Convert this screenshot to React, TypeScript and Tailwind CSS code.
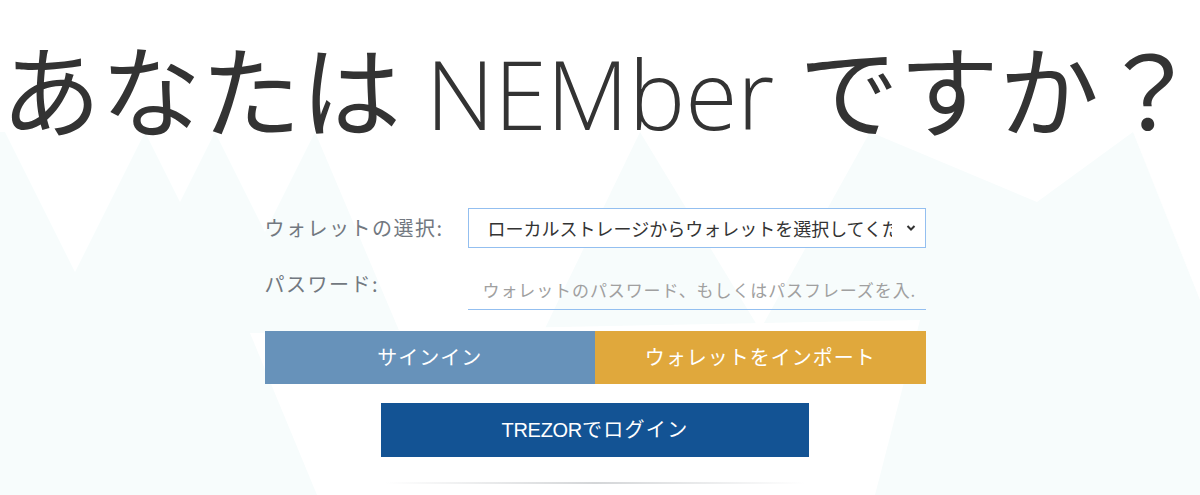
import React from "react";

// ── Background mountains (very faint) ────────────────────────────────────────

function Mountains() {
  const light = "#f7fcfc";
  return (
    <svg
      className="absolute inset-0 h-full w-full"
      viewBox="0 0 1200 495"
      preserveAspectRatio="none"
      aria-hidden="true"
    >
      <rect x="0" y="132" width="1200" height="363" fill={light} />
      {/* white notches between the peaks */}
      <polygon points="5,132 145,132 75,272" fill="#fff" />
      <polygon points="145,132 215,132 180,202" fill="#fff" />
      <polygon points="215,132 315,132 265,232" fill="#fff" />
      <polygon points="315,132 640,132 520,380 420,380" fill="#fff" />
      <polygon points="640,132 870,132 760,330" fill="#fff" />
      <polygon points="870,132 1133,132 1037,202" fill="#fff" />
      <polygon points="1133,132 1200,132 1200,300" fill="#fff" />
      {/* white valley under the buttons */}
      <polygon points="250,333 920,320 875,495 317,495" fill="#fff" />
    </svg>
  );
}

// ── Main ─────────────────────────────────────────────────────────────────────

export default function App() {
  const jp = "font-['Noto_Sans_CJK_JP','Noto_Sans',sans-serif]";
  return (
    <div className={`relative h-[495px] w-[1200px] overflow-hidden bg-white ${jp}`}>
      <Mountains />

      <div className="relative flex flex-col items-center">
        {/* Heading */}
        <h1 className="mt-[37px] whitespace-nowrap text-[100px] leading-none text-[#333]">
          あなたは
          <span className="font-['Open_Sans','Liberation_Sans',sans-serif] text-[95px] font-light"> NEMber </span>
          ですか？
        </h1>

        {/* Form */}
        <div className="mt-[67px] w-[661px] -translate-x-[5px]">
          <div className="flex items-center">
            <label className="w-[203px] text-[20px] tracking-[1.5px] text-[#727880]">ウォレットの選択:</label>
            <div className="flex h-[40px] flex-1 items-center justify-between border border-[#93bff0] bg-white pl-[19px] pr-[9px]">
              <span className="w-[404px] overflow-hidden whitespace-nowrap text-[18px] text-[#333]">
                ローカルストレージからウォレットを選択してください
              </span>
              <svg width="10" height="8" viewBox="0 0 10 8" className="shrink-0">
                <path d="M1.5 2l3.5 3.5L8.5 2" stroke="#333" strokeWidth="2" fill="none" />
              </svg>
            </div>
          </div>

          <div className="mt-[21px] flex items-start">
            <label className="w-[203px] text-[20px] tracking-[1.5px] text-[#727880]">パスワード:</label>
            <div className="flex-1 border-b border-[#93bff0] pb-[6px] pl-[15px] pt-[8px]">
              <span className="whitespace-nowrap text-[17px] tracking-[0.9px] text-[#a0a0a0]">
                ウォレットのパスワード、もしくはパスフレーズを入.
              </span>
            </div>
          </div>

          <div className="mt-[21px] flex h-[53px]">
            <button className="flex-1 bg-[#6792ba] text-[20px] tracking-[1px] text-white">サインイン</button>
            <button className="flex-1 bg-[#e0a83c] text-[20px] tracking-[1px] text-white">ウォレットをインポート</button>
          </div>

          <div className="mt-[19px] flex justify-center">
            <button className="h-[54px] w-[428px] bg-[#135394] text-[20px] text-white">
              <span className="font-['Liberation_Sans',sans-serif] tracking-[-0.3px]">TREZOR</span>
              <span className="tracking-[1.3px]">でログイン</span>
            </button>
          </div>

          <div className="mx-auto mt-[25px] h-[2px] w-[420px] bg-gradient-to-r from-transparent via-[#d4d6d8] to-transparent" />
        </div>
      </div>
    </div>
  );
}
